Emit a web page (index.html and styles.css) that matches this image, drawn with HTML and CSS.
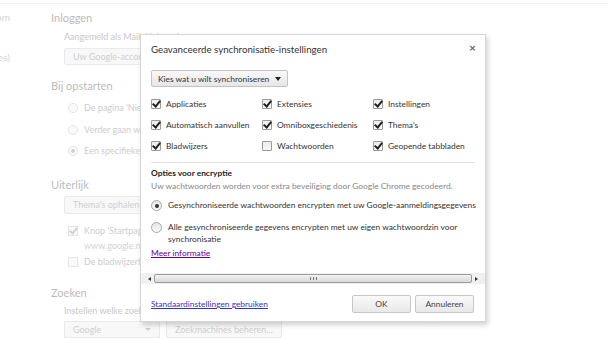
FILE: index.html
```html
<!DOCTYPE html>
<html lang="nl">
<head>
  <meta charset="UTF-8">
  <title>Instellingen</title>
  <link rel="stylesheet" href="styles.css">
</head>
<body>
  <div class="page">
    <div class="sidebar">
      <div class="side-item">Chrom</div>
      <div class="side-item">Extensies)</div>
    </div>

    <div class="settings">
      <section class="section">
        <h3>Inloggen</h3>
        <p class="sub">Aangemeld als Maik Holwerda</p>
        <span class="ghost-btn">Uw Google-account ontkoppelen...</span>
      </section>

      <section class="section startup">
        <h3>Bij opstarten</h3>
        <div class="ghost-radio"><span class="g-circle"></span>De pagina 'Nieuw tabblad' openen</div>
        <div class="ghost-radio"><span class="g-circle"></span>Verder gaan waar ik was gebleven</div>
        <div class="ghost-radio"><span class="g-circle on"></span>Een specifieke pagina of een aantal pagina's openen</div>
      </section>

      <section class="section looks">
        <h3>Uiterlijk</h3>
        <span class="ghost-btn tall">Thema's ophalen</span>
        <div class="ghost-check"><span class="g-box on"></span>Knop 'Startpagina' weergeven</div>
        <div class="ghost-url">www.google.nl/</div>
        <div class="ghost-check last"><span class="g-box"></span>De bladwijzerbalk altijd weergeven</div>
      </section>

      <section class="section search">
        <h3>Zoeken</h3>
        <p class="sub">Instellen welke zoekmachine wordt gebruikt</p>
        <div class="ghost-row">
          <span class="ghost-select">Google <span class="g-caret"></span></span>
          <span class="ghost-btn">Zoekmachines beheren...</span>
        </div>
      </section>
    </div>
  </div>

  <div class="dialog">
    <div class="dlg-head">
      <h2>Geavanceerde synchronisatie-instellingen</h2>
      <span class="close">&#215;</span>
    </div>

    <div class="dlg-body">
      <button class="menu-btn">Kies wat u wilt synchroniseren <span class="caret"></span></button>

      <div class="sync-grid">
        <label class="check"><span class="box on"></span>Applicaties</label>
        <label class="check"><span class="box on"></span>Extensies</label>
        <label class="check"><span class="box on"></span>Instellingen</label>
        <label class="check"><span class="box on"></span>Automatisch aanvullen</label>
        <label class="check"><span class="box on"></span>Omniboxgeschiedenis</label>
        <label class="check"><span class="box on"></span>Thema's</label>
        <label class="check"><span class="box on"></span>Bladwijzers</label>
        <label class="check"><span class="box"></span>Wachtwoorden</label>
        <label class="check"><span class="box on"></span>Geopende tabbladen</label>
      </div>

      <div class="divider"></div>

      <h3>Opties voor encryptie</h3>
      <p class="hint">Uw wachtwoorden worden voor extra beveiliging door Google Chrome gecodeerd.</p>

      <label class="radio first"><span class="circle on"></span><span>Gesynchroniseerde wachtwoorden encrypten met uw Google-aanmeldingsgegevens</span></label>
      <label class="radio"><span class="circle"></span><span>Alle gesynchroniseerde gegevens encrypten met uw eigen wachtwoordzin voor synchronisatie</span></label>

      <a class="more" href="#">Meer informatie</a>
    </div>

    <div class="hscroll">
      <span class="arrow left"></span>
      <div class="track"><div class="thumb"><span class="grip"></span></div></div>
      <span class="arrow right"></span>
    </div>

    <div class="dlg-foot">
      <a class="reset" href="#">Standaardinstellingen gebruiken</a>
      <div class="actions">
        <button class="btn">OK</button>
        <button class="btn">Annuleren</button>
      </div>
    </div>
  </div>
</body>
</html>
```

FILE: styles.css
```css
body {
  margin: 0;
  background: #fff;
  font-family: Lato, "Open Sans", sans-serif;
  font-size: 8.4px;
  line-height: 12px;
  color: #333;
  width: 608px;
  height: 347px;
  overflow: hidden;
  position: relative;
}

/* faded settings page behind the dialog */
.page {
  display: flex;
  border-top: 1px solid #f2f2f2;
  margin-top: 3px;
  color: #c9c9c9;
}

.sidebar {
  width: 10px;
  overflow: hidden;
  padding-top: 7px;
  display: flex;
  flex-direction: column;
  align-items: flex-end;
}

.side-item {
  font-size: 10px;
  color: #d4d4d4;
  margin-bottom: 28px;
  white-space: nowrap;
}

.settings {
  margin-left: 41px;
  padding-top: 7px;
  font-size: 9px;
}

.section h3 {
  margin: 0 0 6px;
  font-size: 11px;
  line-height: 14px;
  font-weight: normal;
  color: #bcbcbc;
}

.sub {
  margin: 0 0 5px 13px;
  color: #c8c8c8;
}

.ghost-btn {
  display: inline-block;
  margin-left: 13px;
  height: 15px;
  line-height: 15px;
  padding: 0 8px;
  border: 1px solid #eaeaea;
  background: #f8f8f8;
  border-radius: 2px;
  color: #cfcfcf;
  white-space: nowrap;
}

.ghost-btn.tall {
  height: 16px;
  line-height: 16px;
}

.startup {
  margin-top: 14px;
}

.startup h3 {
  margin-bottom: 9px;
}

.looks {
  margin-top: 21px;
}

.looks h3 {
  margin-bottom: 4px;
}

.search {
  margin-top: 18px;
}

.search h3 {
  margin-bottom: 5px;
}

.search .sub {
  margin-bottom: 4px;
}

.ghost-radio,
.ghost-check {
  display: flex;
  align-items: center;
  gap: 6px;
  height: 12px;
  margin: 0 0 10px 17px;
  white-space: nowrap;
  color: #cdcdcd;
}

.ghost-radio:nth-of-type(2) {
  margin-bottom: 9px;
}

.ghost-check {
  margin: 11px 0 3px 17px;
}

.ghost-check.last {
  margin-top: 4px;
  margin-bottom: 0;
}

.g-circle {
  width: 8px;
  height: 8px;
  border: 1px solid #e4e4e4;
  border-radius: 50%;
  background: #fafafa;
  position: relative;
}

.g-circle.on::after {
  content: "";
  position: absolute;
  left: 2px;
  top: 2px;
  width: 4px;
  height: 4px;
  border-radius: 50%;
  background: #d0d0d0;
}

.g-box {
  width: 8px;
  height: 8px;
  border: 1px solid #e4e4e4;
  background: #fafafa;
  position: relative;
}

.g-box.on::after {
  content: "";
  position: absolute;
  left: 2px;
  top: -1px;
  width: 3px;
  height: 6px;
  border: solid #d2d2d2;
  border-width: 0 2px 2px 0;
  transform: rotate(40deg);
}

.ghost-url {
  margin-left: 33px;
  color: #d3d3d3;
}

.ghost-row {
  display: flex;
  gap: 6px;
}

.ghost-select {
  display: inline-flex;
  justify-content: space-between;
  align-items: center;
  width: 78px;
  height: 15px;
  margin-left: 13px;
  padding: 0 8px;
  border: 1px solid #eaeaea;
  background: #f8f8f8;
  color: #cfcfcf;
}

.ghost-row .ghost-btn {
  margin-left: 0;
}

.g-caret {
  border: 3px solid transparent;
  border-top: 3px solid #d0d0d0;
  margin-top: 3px;
}

/* dialog */
.dialog {
  position: absolute;
  left: 140px;
  top: 34px;
  width: 344px;
  height: 286px;
  background: #fff;
  border: 1px solid #d6d6d6;
  box-shadow: 2px 3px 5px rgba(0, 0, 0, 0.18);
  display: flex;
  flex-direction: column;
}

.dlg-head {
  display: flex;
  justify-content: space-between;
  padding: 7px 9px 0 10px;
  height: 28px;
}

.dlg-head h2 {
  margin: 0;
  font-size: 9.7px;
  line-height: 14px;
  font-weight: normal;
  color: #333;
}

.close {
  font-size: 12px;
  font-weight: bold;
  color: #666;
  line-height: 12px;
}

.dlg-body {
  padding: 0 4px 0 10px;
}

.menu-btn {
  display: inline-flex;
  align-items: center;
  gap: 6px;
  height: 17px;
  padding: 0 6px;
  font-family: inherit;
  font-size: 8.4px;
  color: #333;
  border: 1px solid #c3c3c3;
  border-radius: 2px;
  background: linear-gradient(#f9f9f9, #e6e6e6);
}

.caret {
  border: 3px solid transparent;
  border-top: 4px solid #222;
  margin-top: 4px;
}

.sync-grid {
  display: grid;
  grid-template-columns: 111px 111px 1fr;
  row-gap: 8px;
  margin-top: 10px;
}

.check {
  display: flex;
  align-items: center;
  gap: 5px;
  height: 13px;
  white-space: nowrap;
}

.box {
  width: 8px;
  height: 8px;
  border: 1px solid #9a9a9a;
  border-radius: 1px;
  background: linear-gradient(#ededed, #fafafa);
  position: relative;
}

.box.on::after {
  content: "";
  position: absolute;
  left: 2px;
  top: -1px;
  width: 3px;
  height: 6px;
  border: solid #222;
  border-width: 0 2px 2px 0;
  transform: rotate(40deg);
}

.divider {
  height: 1px;
  background: #e2e2e2;
  margin: 10px 6px 4px 0;
}

.dlg-body h3 {
  margin: 0;
  font-size: 8.4px;
  line-height: 12px;
  font-weight: bold;
  color: #222;
}

.hint {
  margin: 1px 0 7px;
  color: #888;
}

.radio {
  display: flex;
  align-items: flex-start;
  gap: 6px;
  margin-bottom: 2px;
}

.radio.first {
  margin-bottom: 10px;
  white-space: nowrap;
}

.circle {
  flex: none;
  width: 9px;
  height: 9px;
  margin-top: 1px;
  border: 1px solid #a8a8a8;
  border-radius: 50%;
  background: linear-gradient(#e6e6e6, #fafafa);
  position: relative;
}

.circle.on::after {
  content: "";
  position: absolute;
  left: 2.5px;
  top: 2.5px;
  width: 4px;
  height: 4px;
  border-radius: 50%;
  background: #333;
}

.more {
  display: inline-block;
  color: #609;
}

.hscroll {
  display: flex;
  align-items: center;
  height: 11px;
  margin-top: 14px;
  padding: 0 2px;
  background: #f0f0f0;
}

.arrow {
  width: 0;
  height: 0;
  border: 2px solid transparent;
  margin: 0 3px;
}

.arrow.left {
  border-right: 3px solid #333;
}

.arrow.right {
  border-left: 3px solid #333;
}

.track {
  flex: 1;
  height: 9px;
}

.thumb {
  height: 7px;
  border: 1px solid #9c9c9c;
  border-radius: 2px;
  background: linear-gradient(#f3f3f3, #d8d8d8);
  display: flex;
  justify-content: center;
  align-items: center;
}

.grip {
  width: 5px;
  height: 3px;
  border-left: 1px solid #777;
  border-right: 1px solid #777;
  position: relative;
}

.grip::after {
  content: "";
  position: absolute;
  left: 2px;
  top: 0;
  width: 1px;
  height: 3px;
  background: #777;
}

.dlg-foot {
  display: flex;
  justify-content: space-between;
  align-items: center;
  padding: 11px 11px 0 10px;
}

.reset {
  color: #33c;
}

.actions {
  display: flex;
  gap: 4px;
}

.btn {
  width: 59px;
  height: 18px;
  font-family: inherit;
  font-size: 8.4px;
  color: #444;
  border: 1px solid #c6c6c6;
  border-radius: 2px;
  background: linear-gradient(#fafafa, #e8e8e8);
}
```
